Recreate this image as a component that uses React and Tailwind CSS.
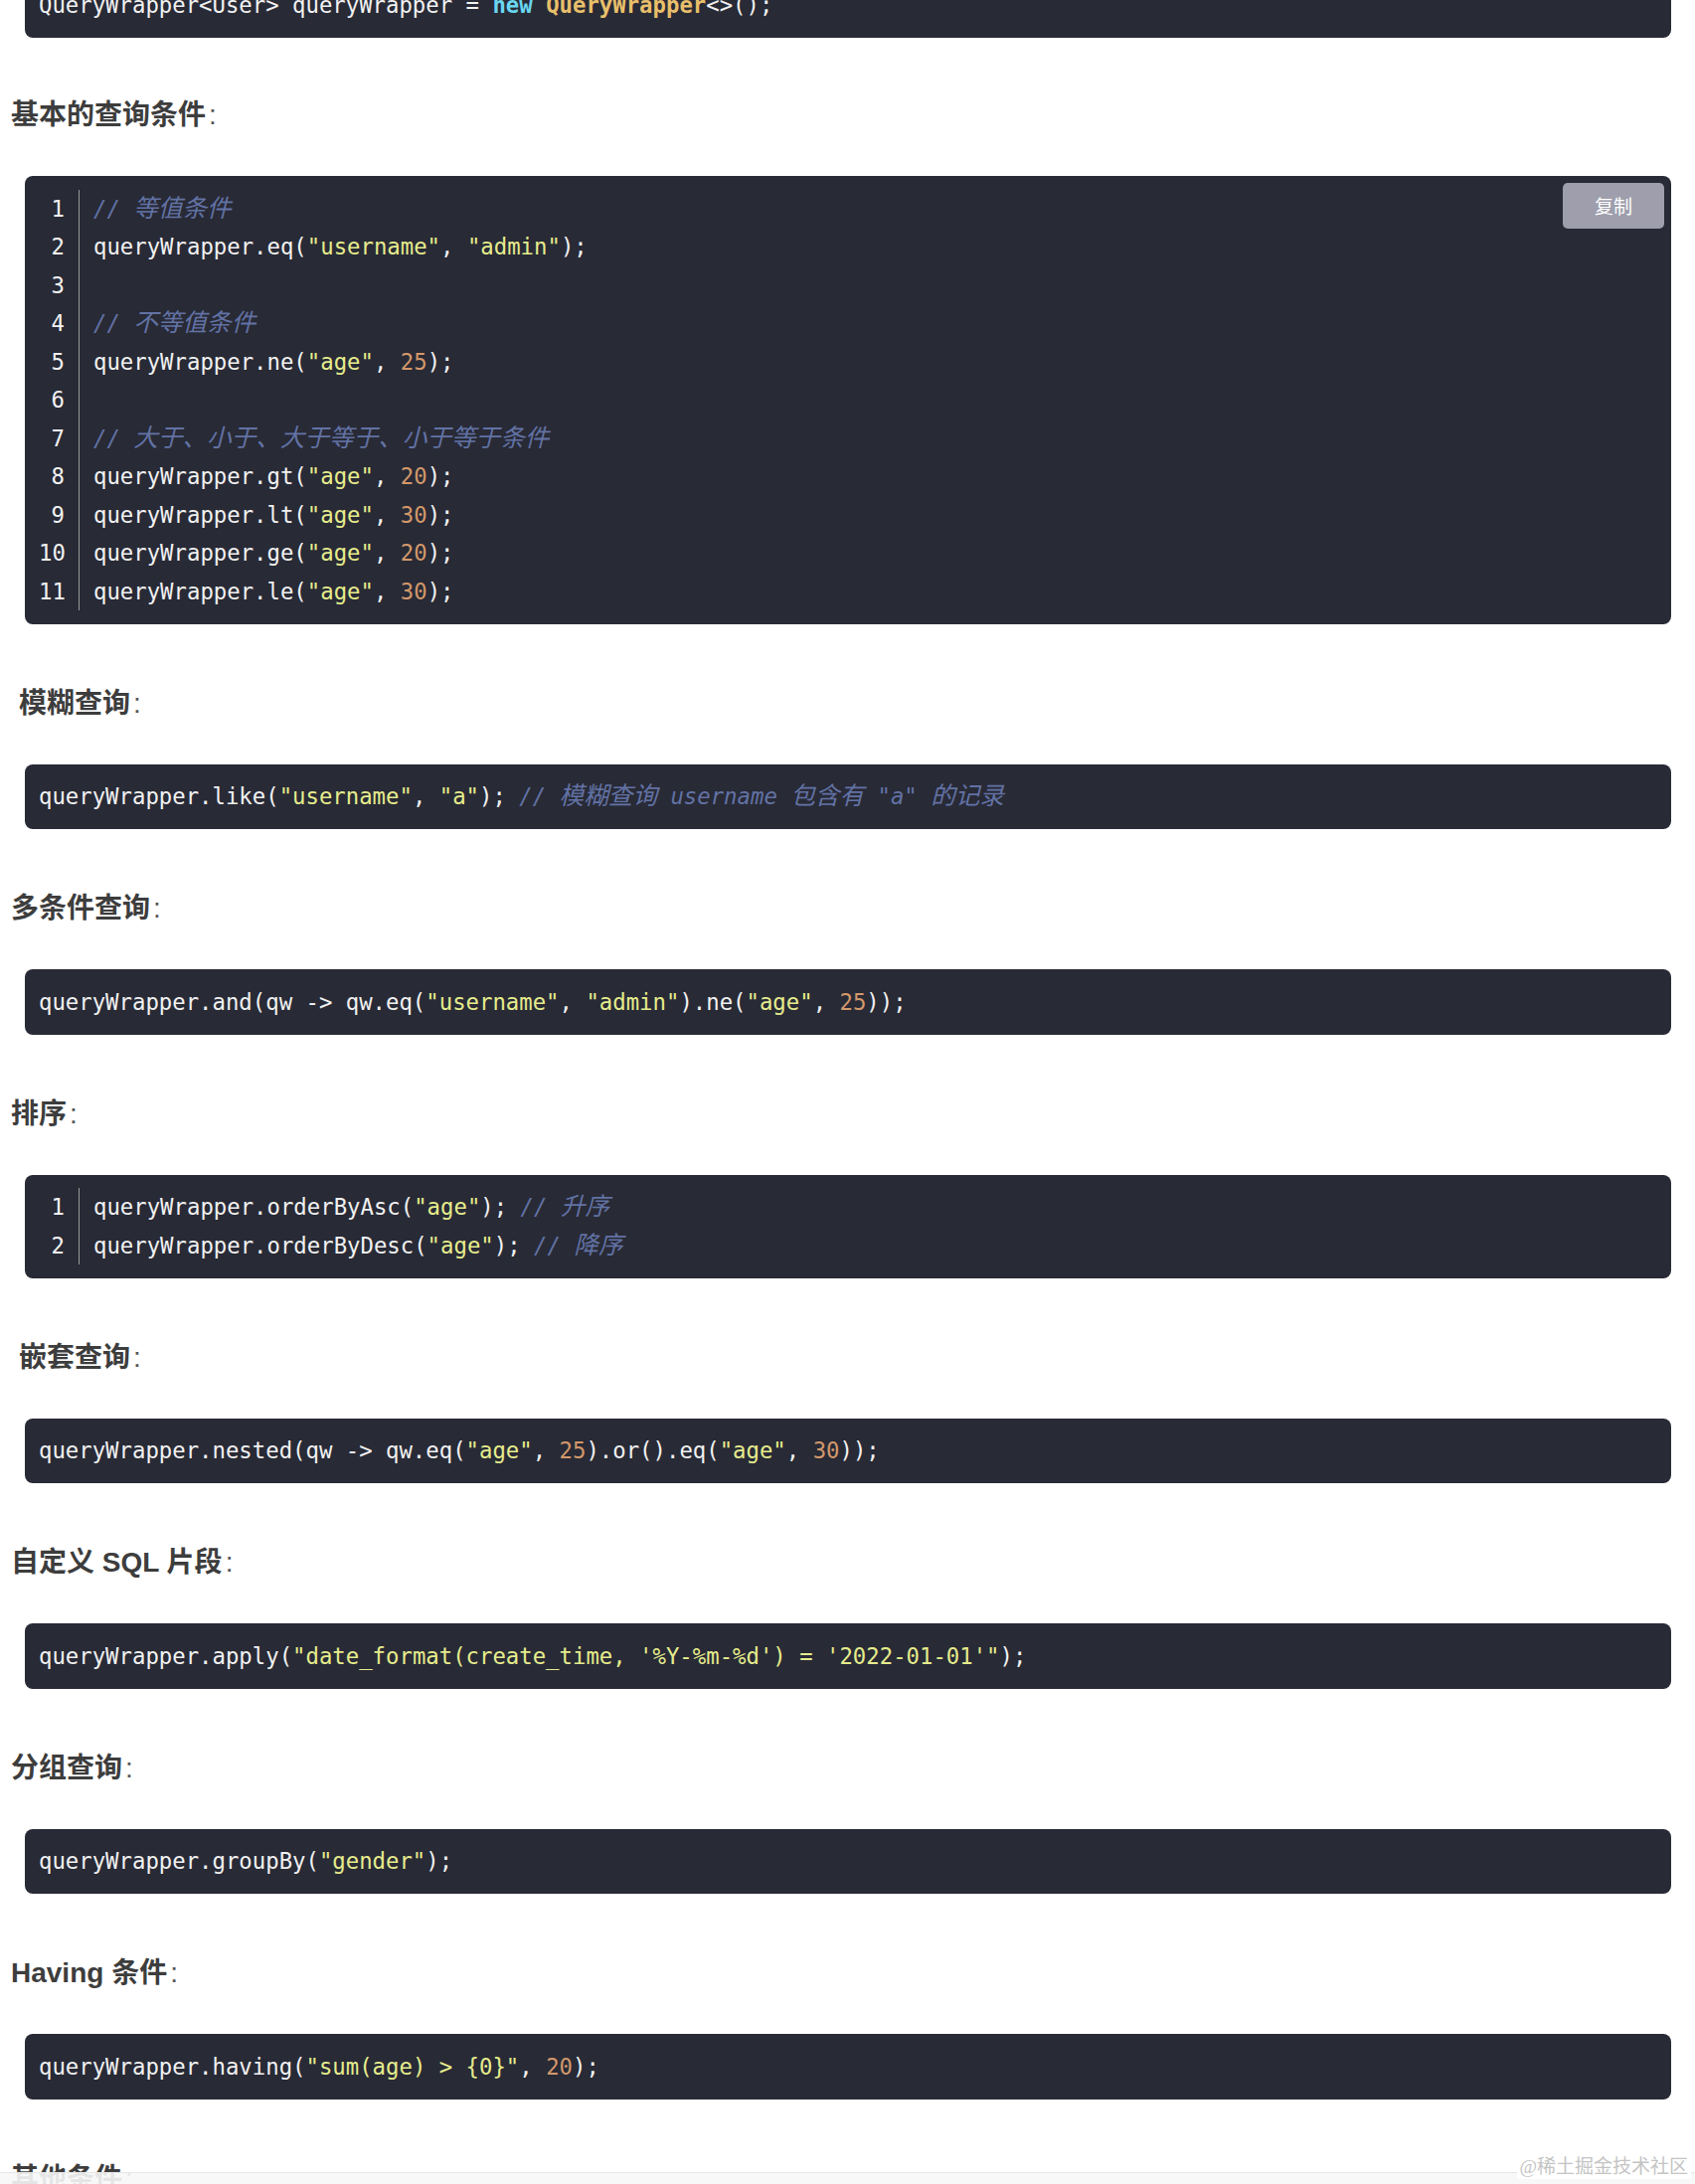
import React from 'react'

const TOK = {
  p: 'text-[#f1f1f1]',
  s: 'text-[#e6ec8c]',
  n: 'text-[#d3986a]',
  c: 'italic text-[#6272a4]',
  k: 'font-bold text-[#6ad6f0]',
  t: 'font-bold text-[#e8bf6a]',
}

const CJK = /([\u3000-\u303f\u4e00-\u9fff\uff00-\uffef]+)/

function Tok({ type, text }) {
  if (type === 'c') {
    // CJK glyphs in comments come out a bit wider than the mono font
    const parts = text.split(CJK)
    return (
      <span className={TOK.c}>
        {parts.map((p, i) => (i % 2 ? <span key={i} className="text-[24.6px]">{p}</span> : p))}
      </span>
    )
  }
  return <span className={TOK[type]}>{text}</span>
}

function Line({ toks }) {
  return (
    <div className="h-[38.5px] whitespace-pre">
      {toks.map(([type, text], i) => <Tok key={i} type={type} text={text} />)}
    </div>
  )
}

function CodeBlock({ lines, numbered, copy, className = '' }) {
  return (
    <div className={`relative ml-[25px] mr-[24px] rounded-[8px] bg-[#282a36] py-[13.5px] pl-[14px] font-['DejaVu_Sans_Mono','Noto_Sans_CJK_SC',monospace] text-[22.3px] leading-[38.5px] ${className}`}>
      {copy && (
        <button className="absolute right-[7px] top-[7px] h-[46px] w-[102px] rounded-[5px] bg-[#9e9eac] text-center font-['Noto_Sans_CJK_SC',sans-serif] text-[19px] leading-[46px] text-white">
          复制
        </button>
      )}
      {numbered ? (
        <div className="flex">
          <div className="w-[41px] shrink-0 border-r border-[#9a9a9a] pr-[14px] text-right text-[#f2f2f2]">
            {lines.map((_, i) => <div key={i} className="h-[38.5px]">{i + 1}</div>)}
          </div>
          <div className="pl-[14px]">
            {lines.map((l, i) => <Line key={i} toks={l} />)}
          </div>
        </div>
      ) : (
        lines.map((l, i) => <Line key={i} toks={l} />)
      )}
    </div>
  )
}

function Heading({ children, indent, className = 'mt-[60px]' }) {
  return (
    <h4 className={`${className} mb-[41px] h-[40px] font-['Liberation_Sans','Noto_Sans_CJK_SC',sans-serif] text-[28px] font-bold leading-[40px] text-[#3d3d3d] ${indent ? 'pl-[19px]' : 'pl-[11px]'}`}>
      {children}
      <span className="ml-[3px] font-normal text-[#555]">:</span>
    </h4>
  )
}

const S = (t) => ['s', `"${t}"`]
const P = (t) => ['p', t]
const N = (t) => ['n', t]
const Cm = (t) => ['c', t]

const BASIC = [
  [Cm('// 等值条件')],
  [P('queryWrapper.eq('), S('username'), P(', '), S('admin'), P(');')],
  [],
  [Cm('// 不等值条件')],
  [P('queryWrapper.ne('), S('age'), P(', '), N('25'), P(');')],
  [],
  [Cm('// 大于、小于、大于等于、小于等于条件')],
  [P('queryWrapper.gt('), S('age'), P(', '), N('20'), P(');')],
  [P('queryWrapper.lt('), S('age'), P(', '), N('30'), P(');')],
  [P('queryWrapper.ge('), S('age'), P(', '), N('20'), P(');')],
  [P('queryWrapper.le('), S('age'), P(', '), N('30'), P(');')],
]

const SECTIONS = [
  {
    title: '模糊查询', indent: true,
    lines: [[P('queryWrapper.like('), S('username'), P(', '), S('a'), P('); '), Cm('// 模糊查询 username 包含有 "a" 的记录')]],
  },
  {
    title: '多条件查询',
    lines: [[P('queryWrapper.and(qw -> qw.eq('), S('username'), P(', '), S('admin'), P(').ne('), S('age'), P(', '), N('25'), P('));')]],
  },
  {
    title: '排序', numbered: true,
    lines: [
      [P('queryWrapper.orderByAsc('), S('age'), P('); '), Cm('// 升序')],
      [P('queryWrapper.orderByDesc('), S('age'), P('); '), Cm('// 降序')],
    ],
  },
  {
    title: '嵌套查询', indent: true,
    lines: [[P('queryWrapper.nested(qw -> qw.eq('), S('age'), P(', '), N('25'), P(').or().eq('), S('age'), P(', '), N('30'), P('));')]],
  },
  {
    title: '自定义 SQL 片段',
    lines: [[P('queryWrapper.apply('), S("date_format(create_time, '%Y-%m-%d') = '2022-01-01'"), P(');')]],
  },
  {
    title: '分组查询',
    lines: [[P('queryWrapper.groupBy('), S('gender'), P(');')]],
  },
  {
    title: 'Having 条件',
    lines: [[P('queryWrapper.having('), S('sum(age) > {0}'), P(', '), N('20'), P(');')]],
  },
]

export default function App() {
  return (
    <div className="relative h-[2197px] w-full overflow-hidden bg-white">
      <CodeBlock
        className="-mt-[28px]"
        lines={[[P('QueryWrapper<User> queryWrapper = '), ['k', 'new'], P(' '), ['t', 'QueryWrapper'], P('<>();')]]}
      />

      <Heading className="mt-[58.5px]">基本的查询条件</Heading>
      <CodeBlock className="mt-[1px]" lines={BASIC} numbered copy />

      {SECTIONS.map((sec) => (
        <div key={sec.title}>
          <Heading indent={sec.indent}>{sec.title}</Heading>
          <CodeBlock lines={sec.lines} numbered={sec.numbered} />
        </div>
      ))}

      <Heading>其他条件</Heading>

      {/* bottom strip + watermark */}
      <div className="absolute bottom-0 left-0 right-0 h-[12px] border-t border-[#e6e6e6] bg-[#f7f7f7]/90" />
      <div className="absolute bottom-[5px] right-[4px] bg-white px-[3px] font-['Liberation_Serif','Noto_Sans_CJK_SC',serif] text-[19px] leading-[24px] text-[#c4c4c4]">
        @稀土掘金技术社区
      </div>
    </div>
  )
}
